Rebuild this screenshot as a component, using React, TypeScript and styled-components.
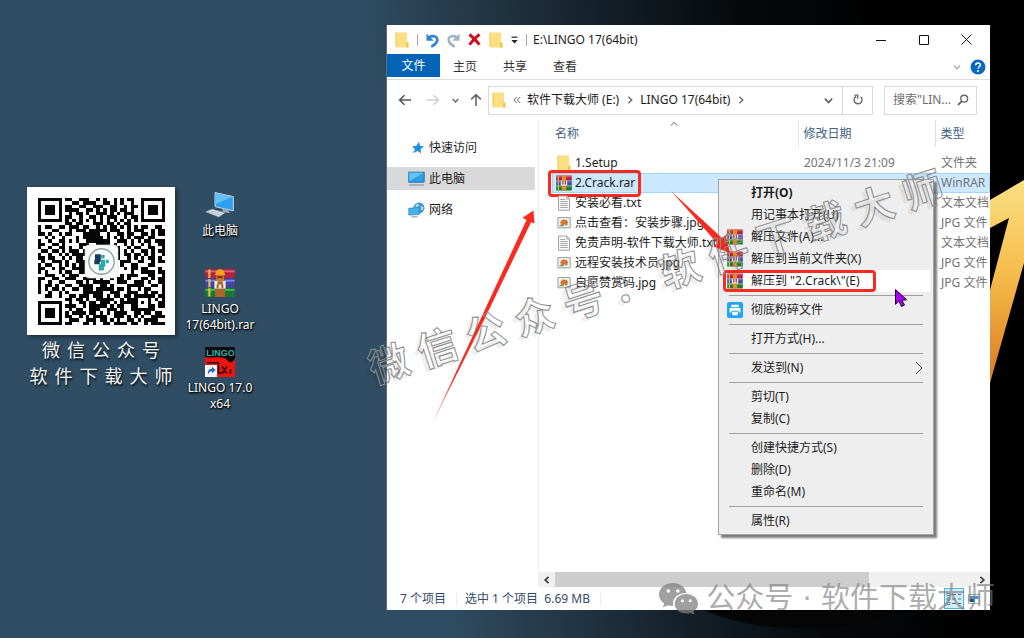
import React from 'react';
import styled, { createGlobalStyle } from 'styled-components';

const GlobalStyle = createGlobalStyle`
  *, *::before, *::after { box-sizing: border-box; }
  body {
    margin: 0;
    background: #000;
    font: 12px/20px "Noto Sans", "Noto Sans CJK SC", sans-serif;
    color: #1c1c1c;
  }
  button, input { font: inherit; color: inherit; border: 0; padding: 0; margin: 0; background: none; }
  a { color: inherit; text-decoration: none; }
  svg { display: block; flex: none; }
`;

/* ---------- Desktop ---------- */

const Desktop = styled.main`
  position: relative;
  display: flex;
  align-items: stretch;
  min-height: 100vh;
  padding: 25px 34px 28px 27px;
  overflow: hidden;
  background:
    radial-gradient(ellipse 150px 70px at 806px calc(100% - 78px), #050506 97%, transparent 100%),
    linear-gradient(82deg, rgba(0, 0, 0, 0) 40%, rgba(0, 0, 0, 0.35) 53%, rgba(0, 0, 0, 0.62) 63%, rgba(0, 0, 0, 0.88) 74%, #000 87%),
    #304d63;
`;

const Numeral = styled.svg`
  position: absolute;
  right: 0;
  top: 180px;
`;

const Account = styled.section`
  width: 148px;
  padding-top: 162px;
`;

const QrCard = styled.div`
  display: flex;
  align-items: center;
  justify-content: center;
  height: 148px;
  background: #fff;
  box-shadow: 2px 2px 4px rgba(0, 0, 0, 0.45);
`;

const Caption = styled.p`
  margin: 2px -10px 0;
  padding-left: 7px;
  font-size: 18px;
  line-height: 26px;
  letter-spacing: 7px;
  text-align: center;
  white-space: nowrap;
  color: #f3f5f6;
  text-shadow: 1px 2px 2px rgba(0, 0, 0, 0.8);
`;

const Shortcuts = styled.nav`
  display: flex;
  flex-direction: column;
  gap: 14px;
  width: 90px;
  padding-top: 167px;
`;

const Shortcut = styled.a<{ $system?: boolean }>`
  display: flex;
  flex-direction: column;
  align-items: center;
  gap: 3px;
  margin-bottom: ${p => (p.$system ? '15px' : '0')};
  line-height: 16px;
  text-align: center;
  color: #fff;
  text-shadow: 1px 1px 2px #000, 0 1px 2px #000;
`;

/* ---------- Explorer window ---------- */

const Explorer = styled.section`
  position: relative;
  display: flex;
  flex: 1;
  flex-direction: column;
  min-width: 0;
  margin-left: 121px;
  background: #fff;
  border-left: 1px solid #5d6d7a;
`;

const TitleBar = styled.header`
  display: flex;
  align-items: center;
  height: 29px;
  padding: 0 2px 0 8px;
`;

const QuickTools = styled.div`
  display: flex;
  align-items: center;
  gap: 8px;
`;

const Divider = styled.span`
  width: 1px;
  height: 12px;
  background: #a5a5a5;
`;

const WindowTitle = styled.h1`
  flex: 1;
  margin: 0 0 0 6px;
  font-size: 12px;
  font-weight: 400;
  white-space: nowrap;
`;

const CaptionButton = styled.button`
  display: grid;
  place-items: center;
  width: 43px;
  height: 29px;
`;

const IconButton = styled.button<{ $width?: number }>`
  display: grid;
  place-items: center;
  width: ${p => (p.$width ? `${p.$width}px` : 'auto')};
`;

const Ribbon = styled.nav`
  display: flex;
  height: 26px;
  padding-right: 4px;
  border-bottom: 1px solid #dcdcdc;
`;

const Tab = styled.button<{ $file?: boolean }>`
  width: ${p => (p.$file ? 53 : 50)}px;
  height: ${p => (p.$file ? 23 : 25)}px;
  background: ${p => (p.$file ? '#0164b4' : 'transparent')};
  color: ${p => (p.$file ? '#fff' : '#333')};
`;

const RibbonEnd = styled.div`
  display: flex;
  gap: 9px;
  align-items: center;
  height: 25px;
  margin-left: auto;
`;

const NavRow = styled.div`
  display: flex;
  align-items: center;
  height: 40px;
  padding: 0 13px 0 4px;
`;

const AddressBar = styled.div`
  display: flex;
  flex: 1;
  align-items: center;
  height: 29px;
  padding-left: 3px;
  border: 1px solid #d9d9d9;
`;

const Crumb = styled.button`
  white-space: nowrap;
`;

const AddressEnd = styled.div`
  display: flex;
  align-self: stretch;
  margin-left: auto;
  > button + button { border-left: 1px solid #d9d9d9; }
`;

const SearchBox = styled.label`
  display: flex;
  align-items: center;
  width: 93px;
  height: 29px;
  margin-left: 11px;
  padding: 0 7px 0 8px;
  border: 1px solid #d9d9d9;
`;

const SearchInput = styled.input`
  flex: 1;
  min-width: 0;
  &::placeholder { color: #6d6d6d; opacity: 1; }
`;

const Body = styled.div`
  display: flex;
  flex: 1;
`;

const Sidebar = styled.nav`
  display: flex;
  flex-direction: column;
  gap: 8px;
  width: 152px;
  padding: 16px 3px 0 0;
  border-right: 1px solid #f0f0f0;
`;

const SideItem = styled.a<{ $active?: boolean }>`
  display: flex;
  align-items: center;
  gap: 4px;
  height: 23px;
  padding-left: 21px;
  background: ${p => (p.$active ? '#d9d9d9' : 'transparent')};
`;

const FilePane = styled.div`
  display: flex;
  flex: 1;
  flex-direction: column;
  min-width: 0;
`;

const ListArea = styled.div`
  flex: 1;
  padding-left: 13px;
`;

const FileTable = styled.table`
  width: 100%;
  table-layout: fixed;
  border-collapse: collapse;
`;

const HeadCell = styled.th<{ $width?: number }>`
  position: relative;
  width: ${p => (p.$width ? `${p.$width}px` : 'auto')};
  height: 27px;
  padding: 0 0 0 ${p => (p.$width ? 5 : 3)}px;
  border-left: ${p => (p.$width ? '1px solid #e2e2e2' : '0')};
  font-weight: 400;
  text-align: left;
  color: #44607f;
`;

const SortMark = styled.span`
  position: absolute;
  top: 0;
  left: 118px;
`;

const Gap = styled.tr`
  height: 6px;
`;

const FileRow = styled.tr<{ $selected?: boolean }>`
  height: 20px;
  background: ${p => (p.$selected ? '#cce8ff' : 'transparent')};
  box-shadow: ${p => (p.$selected ? 'inset 0 0 0 1px #a6d4f7' : 'none')};
`;

const Cell = styled.td`
  padding: 0 0 0 6px;
  white-space: nowrap;
  color: #737373;
  overflow: hidden;
`;

const NameCell = styled.td`
  position: relative;
  padding: 0 0 0 4px;
  white-space: nowrap;
`;

const FileName = styled.span`
  display: grid;
  grid-template-columns: 16px 1fr;
  align-items: center;
  gap: 3px;
  height: 20px;
  > svg { justify-self: center; }
`;

const Highlight = styled.span`
  position: absolute;
  top: -3px;
  left: -4px;
  width: 93px;
  height: 27px;
  border: 3px solid #fa2a22;
  border-radius: 4px;
  pointer-events: none;
`;

const MenuHighlight = styled(Highlight)`
  top: 0;
  left: 1px;
  width: 153px;
  height: 22px;
`;

const ScrollBar = styled.div`
  display: flex;
  justify-content: space-between;
  height: 15px;
  background: #f0f0f0;
`;

const Track = styled.div`
  flex: 1;
`;

const Thumb = styled.div`
  width: 75%;
  height: 15px;
  background: #cdcdcd;
`;

const StatusBar = styled.footer`
  display: flex;
  align-items: center;
  height: 23px;
  padding: 0 6px 0 13px;
  color: #35496b;
`;

const StatusText = styled.span`
  padding-right: 10px;
  margin-right: 8px;
  border-right: 1px solid #ececec;
  line-height: 12px;
  white-space: pre;
`;

const ViewButton = styled.button<{ $on?: boolean }>`
  display: grid;
  place-items: center;
  width: 20px;
  height: 21px;
  margin-left: ${p => (p.$on ? 'auto' : '0')};
  border: ${p => (p.$on ? '1px solid #4fb6d8' : '0')};
  background: ${p => (p.$on ? '#cdeef9' : 'transparent')};
`;

/* ---------- Context menu ---------- */

const Menu = styled.div`
  position: absolute;
  top: 154px;
  left: 331px;
  width: 216px;
  padding: 2px 3px;
  border: 1px solid #a3a3a3;
  background: #eee;
  box-shadow: 3px 3px 2px rgba(80, 80, 80, 0.75);
`;

const MenuItem = styled.button<{ $hover?: boolean; $bold?: boolean }>`
  position: relative;
  display: grid;
  grid-template-columns: 24px 1fr auto;
  align-items: center;
  width: 100%;
  height: 22px;
  padding: 0 7px 0 5px;
  text-align: left;
  font-weight: ${p => (p.$bold ? 700 : 400)};
  background: ${p => (p.$hover ? '#fff' : 'transparent')};
  > span { white-space: nowrap; }
`;

const Separator = styled.hr`
  height: 1px;
  margin: 3px 7px;
  border: 0;
  background: #a0a0a0;
`;

/* ---------- Overlays ---------- */

const Arrows = styled.svg`
  position: absolute;
  top: 165px;
  left: 34px;
  pointer-events: none;
`;

const Pointer = styled.svg`
  position: absolute;
  top: 263px;
  left: 507px;
  pointer-events: none;
`;

const Watermark = styled.div`
  position: absolute;
  top: 223px;
  left: -36px;
  width: 620px;
  font-size: 40px;
  line-height: 54px;
  font-weight: 700;
  letter-spacing: 11px;
  text-align: center;
  white-space: nowrap;
  transform: rotate(-18deg);
  color: transparent;
  -webkit-text-stroke: 1px #8c8c8c;
  text-shadow: -5px 2px 0 rgba(0, 0, 0, 0.07);
  pointer-events: none;
`;

const Signature = styled.div`
  position: absolute;
  right: -5px;
  bottom: -6px;
  display: flex;
  align-items: center;
  gap: 8px;
  font: 400 29px/36px "DejaVu Sans", "Noto Sans CJK SC", sans-serif;
  color: rgba(125, 125, 125, 0.65);
  white-space: nowrap;
  pointer-events: none;
`;

/* ---------- Drawings ---------- */

const Folder = () => (
  <svg width="14" height="16" viewBox="0 0 14 16">
    <path d="M0.5 0.5H12v11.8h1.5V15.5H1.8L0.5 14.6z" fill="#fbdf82" />
    <path d="M11.2 10.5h2.3v5h-2.3z" fill="#eec44e" />
    <path d="M0.5 0.5h1.2v15l-1.2-.8z" fill="#f5d06c" />
  </svg>
);

const Books = ({ size = 16, strap = 'small' }: { size?: number; strap?: 'small' | 'large' }) => (
  <svg width={size} height={size} viewBox="0 0 16 16">
    <path d="M.2.5h15.600v4.900H.2z" fill="#b3213f" />
    <path d="M.2 5.600h15.600v4.700H.2z" fill="#4644a8" />
    <path d="M.2 10.500h15.600v5H.2z" fill="#197a34" />
    <path d="M.2 1.300h15.600v1H.2z" fill="#e0607a" />
    <path d="M.2 6.300h15.600v1H.2z" fill="#7f86dc" />
    <path d="M.2 11.200h15.600v1H.2z" fill="#45b45d" />
    <path d="M1.800.8h1.100v4.500H1.800zM1.800 5.800h1.100v4.400H1.800zM1.800 10.800h1.100v4.400H1.800z" fill="#e9c34c" />
    {strap === 'small' ? (
      <>
        <path d="M5.800.5h4.400v15H5.800z" fill="#e58a2d" />
        <path d="M4.800 5.600h6.400v5H4.800z" fill="#efe7df" />
        <path d="M6.200 5.600h1.200v3.800H6.200zM8.700 5.600h1.200v3.800H8.700z" fill="#9c4630" />
      </>
    ) : (
      <>
        <path d="M5.600 3.200C5.600-.2 10.500-.2 10.500 3.200l.5.7H5.100z" fill="#f5a31c" />
        <path d="M6 3.900h4.100v3.500H6z" fill="#d07a26" />
        <path d="M6.600 4.400h2.800v1H6.600z" fill="#643310" />
        <path d="M5 7h6v4H5z" fill="#f4eee4" />
        <path d="M6.700 7h2.800v1.800H6.700zM6.200 8.800h1.100v2H6.200zM8.700 8.800h1.100v2H8.700z" fill="#b0622a" />
        <path d="M5.400 11.200h5.300v4.300H5.400z" fill="#b0622a" />
      </>
    )}
  </svg>
);

const TextDoc = () => (
  <svg width="14" height="16" viewBox="0 0 14 16">
    <path d="M1.500 1h8.300l2.700 2.700V15.200h-11z" fill="#f7f7f7" stroke="#a2a2a2" />
    <path d="M9.700 1v3h2.800" fill="none" stroke="#a2a2a2" />
    <path d="M3.200 4.500h5M3.200 6.500h7.600M3.200 8.500h7.600M3.200 10.500h7.600M3.200 12.500h7.600" stroke="#a8a8a8" />
  </svg>
);

const ImageDoc = () => (
  <svg width="14" height="16" viewBox="0 0 14 16">
    <path d="M.9 2.600h12.300v10.200H.9z" fill="#f4f6f6" stroke="#9c9c9c" />
    <path d="M2.500 4.200h9v6.900h-9z" fill="#e9eee6" />
    <path d="M2.800 8l2.700-3.500L9.800 5l1.600 3-2 .2v2H8V8.500L6.600 10.600H3.400l1-2.200z" fill="#d9722f" />
    <path d="M2.500 10h4v1.200h-4zM8.800 7.300h1.600v3H8.800z" fill="#719a61" />
  </svg>
);

const Monitor = () => (
  <svg width="17" height="16" viewBox="0 0 17 16">
    <path d="M.8 1.200h15.400v10H.8z" fill="#2c9fe6" stroke="#2474ab" />
    <path d="M1.400 1.800h14.200L1.400 10z" fill="#66c5f7" />
    <path d="M1 14h15" stroke="#8ca2b1" strokeWidth="1.400" />
  </svg>
);

const Star = () => (
  <svg width="17" height="16" viewBox="0 0 17 16">
    <path d="M11 1.800l1 4 4 .6-3.500 2.800.7 4.200-3.600-2.300-3.800 2 1.100-4.200L4 6.200l4.300-.3z" fill="#1f8edb" />
    <path d="M3.600 11.900l3.300-1.200-.6 2z" fill="#6fb9ea" />
  </svg>
);

const Network = () => (
  <svg width="17" height="16" viewBox="0 0 17 16">
    <circle cx="11" cy="6" r="5.500" fill="#3f97cf" />
    <path d="M8 2.200c1.800-.8 3.600.3 2.900 1.800-.8 1.300-2.900 1-3.900 2.200zM12.600 4l3 .9-.8 4-2-1.500z" fill="#a7daf0" />
    <path d="M.8 6.300l10.400-1v7.200L.8 13z" fill="#43b4ef" stroke="#2c7fb7" strokeWidth=".7" />
    <path d="M3.500 14.800h6" stroke="#8aa5b8" strokeWidth="1.200" />
  </svg>
);

type Side = 'up' | 'down' | 'left' | 'right';

const Chevron = ({ dir, color = '#666', size = 8, width = 1.3 }: { dir: Side; color?: string; size?: number; width?: number }) => {
  const turn = { right: 0, down: 90, left: 180, up: 270 }[dir];
  return (
    <svg width={size} height={size} viewBox="0 0 8 8">
      <path d="M2.400.8L5.800 4 2.400 7.200" fill="none" stroke={color} strokeWidth={width} transform={`rotate(${turn} 4 4)`} />
    </svg>
  );
};

const Arrow = ({ dir, color }: { dir: 'left' | 'right' | 'up'; color: string }) => (
  <svg width="14" height="14" viewBox="0 0 14 14">
    <path d="M13 7H1.700M6.400 2.200L1.600 7l4.800 4.800" fill="none" stroke={color} strokeWidth="1.600" transform={`rotate(${{ left: 0, up: 90, right: 180 }[dir]} 7 7)`} />
  </svg>
);

const Undo = ({ color, flip }: { color: string; flip?: boolean }) => (
  <svg width="13" height="16" viewBox="0 0 13 16">
    <g transform={flip ? 'translate(13 0) scale(-1 1)' : undefined}>
      <path d="M3 5.400C8 2.500 12.500 5 11 9.200C10 11.800 8 13.400 5.200 14.600" fill="none" stroke={color} strokeWidth="2.600" />
      <path d="M.5 1.500v7.300h7.300z" fill={color} />
    </g>
  </svg>
);

const DesktopPc = () => (
  <svg width="30" height="28" viewBox="0 0 30 28">
    <path d="M10 .6l18.300 4v14.200L10 14.600z" fill="#2fa0ef" stroke="#c6d8e4" strokeWidth="1" />
    <path d="M10.600 1.400l16.800 3.700L10.600 12z" fill="#62c2fb" />
    <path d="M17.400 17l6 1.300 1.200 3-6.800-1.600z" fill="#9fb0bb" />
    <path d="M.8 19.800l6.400-2.600 12.600 3.600-6 4.200z" fill="#e2e7ea" stroke="#94a3ad" strokeWidth=".7" />
    <path d="M3.600 19.800l11.400 3.400M6 18.800l11.400 3.200" stroke="#9da9b1" strokeWidth=".7" />
  </svg>
);

const LingoIcon = () => (
  <svg width="30" height="30" viewBox="0 0 30 30">
    <path d="M0 0h30v30H0z" fill="#ee1410" />
    <path d="M0 0h30v11c-2 4-4 6-7 3-3-3-5-4-8-4H0z" fill="#12090c" />
    <path d="M2 15.800h12M13.500 16v10h4M17 19.500l5 7M22 19.500l-5 7M25.500 22v5" fill="none" stroke="#260a09" strokeWidth="1.500" />
    <text x="15.500" y="9.300" textAnchor="middle" fontFamily="Liberation Sans, sans-serif" fontSize="9" fontWeight="700" fill="#2ab5ae">LINGO</text>
    <path d="M0 18h12v12H0z" fill="#f4f6f8" />
    <path d="M3 27.500c-.4-4 1.400-5.700 4-5.700v-2L10.600 23 7 26.300v-2c-2 0-3 .7-4 3.200z" fill="#2666b6" />
  </svg>
);

const Printer = () => (
  <svg width="16" height="16" viewBox="0 0 16 16">
    <rect width="16" height="16" rx="2" fill="#20a6f5" />
    <path d="M4.300 2.700h7.400v2.600H4.300zM2.600 6h10.800v4.400h-1.800V8.800H4.400v1.600H2.600zM5.300 9.800h5.400v3.400H5.300z" fill="#fff" />
  </svg>
);

const QR_ROWS = [
  '#######.##..###..#.#..#.#.##..#######',
  '#.....#...##.####..##.#.#..#..#.....#',
  '#.###.#.##..##..###..##..#.##.#.###.#',
  '#.###.#.####..##.#.#.##.##.#..#.###.#',
  '#.###.#..#.##.#..###.#.#.###..#.###.#',
  '#.....#.##..#..##.#.###..#.##.#.....#',
  '#######.#.#.#.#.#.#.#.#.#.#.#.#######',
  '........##.##...###.##.#.##..........',
  '#.##..##.###.##..#.#.##.#.#.#.##..##.',
  '#...##...#.###.#####.###..#.###..#.##',
  '##.#..#.##...#####..#..##.##..##.#.##',
  '..#.#..#...#.######.#.#.#.#.###.##...',
  '#..#..##.#.#..#######..###.#.#.##.###',
  '##..##.#....###..####.#..#.#..#.#..##',
  '#..#..##.#..#........###..#.##..##..#',
  '.##.##.#.###.#......#..#.#.#..##.#.##',
  '#..#..#.#.####.......###.##.##.#.#..#',
  '##.##..#.#.##........#.#..#.#.#.##.#.',
  '.#..###.#..###.......##.###..##..#.##',
  '#.##..#.#.#.##........#.#..##...##...',
  '##..#.##..####.......##..#.##.##...#.',
  '#.#...#.##..##......#.#....#..####.##',
  '..###..#.###..#.#.##.##.#.###...##..#',
  '##..##..###..####.#..#.##.#...##.#.##',
  '#..#..##...##.#.#####..###..###.#..##',
  '#.##.#..##..####..##.#....#####..##.#',
  '#.#.##.#..##.###.#####.##.#..#.##...#',
  '#..#..#.#....######..###..###..#.##.#',
  '..##..#..##.###.###.#.##.##.######.##',
  '........##.##.#..#####..#.###...#.#.#',
  '#######..#..##.##.###.#.#####.#.#..##',
  '#.....#.###..#.#####.#.##..##...##.##',
  '#.###.#..#.##..###..###.#..#######...',
  '#.###.#.#.####.##.#.#.####..##.##.##.',
  '#.###.#.##..#.#.####..###.#.#.#..####',
  '#.....#..###..###.##.#.#..##.#.####..',
  '#######.##...##.#..##.####.##..#.####',
];

// Each run of dark modules becomes one rectangle.
const qrPath = QR_ROWS.map((row, y) =>
  [...row.matchAll(/#+/g)].map(run => `M${run.index} ${y}h${run[0].length}v1h-${run[0].length}z`).join(''),
).join('');

const QrCode = () => (
  <svg width="127" height="127" viewBox="0 0 37 37" role="img" aria-label="二维码">
    <path d={qrPath} fill="#050505" shapeRendering="crispEdges" />
    <rect x="13.700" y="13.700" width="9.600" height="9.600" rx="1.200" fill="#f8fafa" stroke="#dfe3e4" strokeWidth=".2" />
    <circle cx="18.500" cy="18.500" r="3.700" fill="#fff" stroke="#8fa3ab" strokeWidth=".4" />
    <path d="M16.600 16.400h1.700v2.200h-1.700zM16.400 18h1.600v1.300h-1.600z" fill="#173c62" />
    <path d="M18.400 16.600h1v1h-1zM19.800 18h.8v1h-.8zM17.700 19.300h1.500v1.800h-1.500zM18.300 18h1.300v2h-1.300z" fill="#28aaa6" />
  </svg>
);

const WeChat = () => (
  <svg width="39" height="31" viewBox="0 0 39 31">
    <path fillRule="evenodd" d="M14 0C6 0 0 5.200 0 11.600c0 3.700 2 6.900 5.200 9l-1.300 4 4.700-2.400c1.900.5 3.700.8 5.700.7C12.600 15.700 18.500 9.900 27.500 10C26.300 4.200 20.700 0 14 0zM9.300 6.200a1.800 1.800 0 1 1 0 3.600a1.800 1.800 0 0 1 0-3.600zM18.800 6.200a1.800 1.800 0 1 1 0 3.600a1.800 1.800 0 0 1 0-3.600z" fill="#808080" opacity=".75" />
    <path fillRule="evenodd" d="M27.300 11C20.700 11 15.700 15.400 15.700 20.800C15.700 26.300 20.700 30.600 27.300 30.600c1.500 0 3-.3 4.300-.7l3.900 2-1-3.400C37.200 26.700 39 24 39 20.800C39 15.400 33.800 11 27.300 11zM23.400 16.200a1.500 1.500 0 1 1 0 3a1.500 1.500 0 0 1 0-3zM31.200 16.200a1.500 1.500 0 1 1 0 3a1.500 1.500 0 0 1 0-3z" fill="#808080" opacity=".75" />
  </svg>
);

/* ---------- Data ---------- */

const files = [
  { name: '1.Setup', date: '2024/11/3 21:09', type: '文件夹', icon: <Folder /> },
  { name: '2.Crack.rar', date: '', type: 'WinRAR', icon: <Books />, selected: true },
  { name: '安装必看.txt', date: '', type: '文本文档', icon: <TextDoc /> },
  { name: '点击查看：安装步骤.jpg', date: '', type: 'JPG 文件', icon: <ImageDoc /> },
  { name: '免责声明-软件下载大师.txt', date: '', type: '文本文档', icon: <TextDoc /> },
  { name: '远程安装技术员.jpg', date: '', type: 'JPG 文件', icon: <ImageDoc /> },
  { name: '自愿赞赏码.jpg', date: '', type: 'JPG 文件', icon: <ImageDoc /> },
];

type Entry = { label: string; icon?: React.ReactNode; bold?: boolean; marked?: boolean; more?: boolean };

const menuGroups: Entry[][] = [
  [
    { label: '打开(O)', bold: true },
    { label: '用记事本打开(U)' },
    { label: '解压文件(A)...', icon: <Books /> },
    { label: '解压到当前文件夹(X)', icon: <Books /> },
    { label: '解压到 "2.Crack\\"(E)', icon: <Books />, marked: true },
  ],
  [{ label: '彻底粉碎文件', icon: <Printer /> }],
  [{ label: '打开方式(H)...' }],
  [{ label: '发送到(N)', more: true }],
  [{ label: '剪切(T)' }, { label: '复制(C)' }],
  [{ label: '创建快捷方式(S)' }, { label: '删除(D)' }, { label: '重命名(M)' }],
  [{ label: '属性(R)' }],
];

export default function App() {
  return (
    <Desktop>
      <GlobalStyle />
      <Numeral width="34" height="204" viewBox="0 0 34 204">
        <defs>
          <linearGradient id="gold" x1="0" y1="0" x2="0" y2="1">
            <stop offset="0" stopColor="#fbe083" />
            <stop offset=".45" stopColor="#f6bd4d" />
            <stop offset="1" stopColor="#d97a1c" />
          </linearGradient>
        </defs>
        <path d="M0 20L34 0V83L0 203V110L19 38L0 48z" fill="url(#gold)" />
      </Numeral>

      <Account>
        <QrCard><QrCode /></QrCard>
        <Caption>微信公众号<br />软件下载大师</Caption>
      </Account>

      <Shortcuts>
        <Shortcut href="#pc" $system><DesktopPc />此电脑</Shortcut>
        <Shortcut href="#rar"><Books size={30} strap="large" /><span>LINGO<br />17(64bit).rar</span></Shortcut>
        <Shortcut href="#lingo"><LingoIcon /><span>LINGO 17.0<br />x64</span></Shortcut>
      </Shortcuts>

      <Explorer>
        <TitleBar>
          <QuickTools>
            <Folder />
            <Divider />
            <IconButton aria-label="撤消"><Undo color="#2f86cc" /></IconButton>
            <IconButton aria-label="恢复"><Undo color="#a3b2c8" flip /></IconButton>
            <IconButton aria-label="删除">
              <svg width="13" height="13" viewBox="0 0 13 13"><path d="M1.500 1.500C4 3.500 8.500 8 11.500 11.700M11.500 1.300C8.500 3.500 4 8 1.500 11.700" stroke="#d60a17" strokeWidth="2.900" fill="none" /></svg>
            </IconButton>
            <IconButton aria-label="新建文件夹"><Folder /></IconButton>
            <IconButton aria-label="自定义">
              <svg width="7" height="8" viewBox="0 0 7 8"><path d="M.5 1.200h6" stroke="#222" strokeWidth="1.200" /><path d="M.3 4h6.400L3.500 7.400z" fill="#222" /></svg>
            </IconButton>
            <Divider />
          </QuickTools>
          <WindowTitle>E:\LINGO 17(64bit)</WindowTitle>
          <CaptionButton aria-label="最小化"><svg width="10" height="10"><path d="M0 5.500h10" stroke="#111" /></svg></CaptionButton>
          <CaptionButton aria-label="最大化"><svg width="10" height="10"><path d="M.5.5h9v9h-9z" stroke="#111" fill="none" /></svg></CaptionButton>
          <CaptionButton aria-label="关闭"><svg width="11" height="11"><path d="M.5.5l10 10M10.500.5l-10 10" stroke="#111" /></svg></CaptionButton>
        </TitleBar>

        <Ribbon>
          <Tab $file>文件</Tab>
          <Tab>主页</Tab>
          <Tab>共享</Tab>
          <Tab>查看</Tab>
          <RibbonEnd>
            <IconButton aria-label="展开功能区"><Chevron dir="down" color="#aaa" /></IconButton>
            <IconButton aria-label="帮助">
              <svg width="16" height="16" viewBox="0 0 16 16">
                <circle cx="8" cy="8" r="7.500" fill="#0b68c1" />
                <path d="M5.700 6.300c0-3.200 4.800-3 4.600-.2-.1 1.600-2.100 1.700-2.200 3.500" fill="none" stroke="#fff" strokeWidth="1.600" />
                <circle cx="8" cy="12" r="1" fill="#fff" />
              </svg>
            </IconButton>
          </RibbonEnd>
        </Ribbon>

        <NavRow>
          <IconButton $width={28} aria-label="后退"><Arrow dir="left" color="#555" /></IconButton>
          <IconButton $width={28} aria-label="前进"><Arrow dir="right" color="#cfcfcf" /></IconButton>
          <IconButton $width={16} aria-label="最近浏览的位置"><Chevron dir="down" size={7} width={1.6} /></IconButton>
          <IconButton $width={25} aria-label="上移"><Arrow dir="up" color="#666" /></IconButton>
          <AddressBar>
            <Folder />
            <IconButton $width={21} aria-label="更多位置">
              <svg width="8" height="8" viewBox="0 0 8 8"><path d="M3.700 1L.9 4l2.800 3M7.200 1L4.400 4l2.800 3" fill="none" stroke="#666" /></svg>
            </IconButton>
            <Crumb>软件下载大师 (E:)</Crumb>
            <IconButton $width={21} aria-label="展开"><Chevron dir="right" /></IconButton>
            <Crumb>LINGO 17(64bit)</Crumb>
            <IconButton $width={21} aria-label="展开"><Chevron dir="right" /></IconButton>
            <AddressEnd>
              <IconButton $width={28} aria-label="历史记录"><Chevron dir="down" width={1.6} size={9} /></IconButton>
              <IconButton $width={30} aria-label="刷新">
                <svg width="12" height="12" viewBox="0 0 12 12">
                  <path d="M8.600 2.700A4 4 0 1 1 4 2.400" fill="none" stroke="#666" strokeWidth="1.400" />
                  <path d="M2.200 1.200h3.500v3.500" fill="none" stroke="#666" strokeWidth="1.300" />
                </svg>
              </IconButton>
            </AddressEnd>
          </AddressBar>
          <SearchBox>
            <SearchInput aria-label="搜索" placeholder={'搜索"LIN...'} />
            <svg width="12" height="12" viewBox="0 0 12 12"><circle cx="7.200" cy="4.700" r="3.400" fill="none" stroke="#666" strokeWidth="1.400" /><path d="M4.800 7.200L1 11" stroke="#666" strokeWidth="1.800" /></svg>
          </SearchBox>
        </NavRow>

        <Body>
          <Sidebar>
            <SideItem href="#quick"><Star />快速访问</SideItem>
            <SideItem href="#this-pc" $active><Monitor />此电脑</SideItem>
            <SideItem href="#network"><Network />网络</SideItem>
          </Sidebar>
          <FilePane>
            <ListArea>
              <FileTable>
                <thead>
                  <tr>
                    <HeadCell>名称<SortMark><Chevron dir="up" width={1} /></SortMark></HeadCell>
                    <HeadCell $width={137}>修改日期</HeadCell>
                    <HeadCell $width={55}>类型</HeadCell>
                  </tr>
                </thead>
                <tbody>
                  <Gap />
                  {files.map(f => (
                    <FileRow key={f.name} $selected={f.selected}>
                      <NameCell>
                        <FileName>{f.icon}{f.name}</FileName>
                        {f.selected && <Highlight />}
                      </NameCell>
                      <Cell>{f.date}</Cell>
                      <Cell>{f.type}</Cell>
                    </FileRow>
                  ))}
                </tbody>
              </FileTable>
            </ListArea>
            <ScrollBar>
              <IconButton $width={16} aria-label="向左滚动"><Chevron dir="left" color="#444" width={1.8} /></IconButton>
              <Track><Thumb /></Track>
              <IconButton $width={16} aria-label="向右滚动"><Chevron dir="right" color="#444" width={1.8} /></IconButton>
            </ScrollBar>
          </FilePane>
        </Body>

        <StatusBar>
          <StatusText>7 个项目</StatusText>
          <StatusText>选中 1 个项目  6.69 MB</StatusText>
          <ViewButton $on aria-label="详细信息">
            <svg width="16" height="16" viewBox="0 0 16 16"><path d="M1 2.500h3v2H1zM1 7h3v2H1zM1 11.500h3v2H1z" fill="#fff" stroke="#596a78" strokeWidth=".8" /><path d="M6 3.500h4M12 3.500h3M6 8h4M12 8h3M6 12.500h4M12 12.500h3" stroke="#596a78" /></svg>
          </ViewButton>
          <ViewButton aria-label="大图标">
            <svg width="12" height="10" viewBox="0 0 12 10"><path d="M.5.500h11v9H.5z" fill="#fff" stroke="#9ab" /><path d="M1.500 2h9v3h-9z" fill="#4a90e0" /><path d="M1.500 5h5v3h-5z" fill="#234a50" /></svg>
          </ViewButton>
        </StatusBar>

        <Menu role="menu">
          {menuGroups.map((group, i) => (
            <React.Fragment key={i}>
              {i > 0 && <Separator />}
              {group.map(item => (
                <MenuItem key={item.label} role="menuitem" $bold={item.bold} $hover={item.marked}>
                  <span>{item.icon}</span>
                  <span>{item.label}</span>
                  {item.more && (
                    <svg width="8" height="14" viewBox="0 0 8 14"><path d="M1 1l6 6-6 6" fill="none" stroke="#444" /></svg>
                  )}
                  {item.marked && <MenuHighlight />}
                </MenuItem>
              ))}
            </React.Fragment>
          ))}
        </Menu>

        <Arrows width="320" height="240" viewBox="421 190 320 240">
          <defs>
            <linearGradient id="fade" x1="0" y1="1" x2="0" y2="0">
              <stop offset="0" stopColor="#fb2a1f" stopOpacity=".2" />
              <stop offset=".25" stopColor="#fb2a1f" />
            </linearGradient>
          </defs>
          <path d="M430 428L526.500 220L522.500 217.800L533.500 210.500L534.500 223.500L531 222.200L486 316z" fill="url(#fade)" />
          <path d="M671 191L722 238L725.500 235L730 253L713.500 246.500L717 243z" fill="#fb2a1f" />
        </Arrows>

        <Watermark>微信公众号：软件下载大师</Watermark>

        <Signature><WeChat /><span>公众号 · 软件下载大师</span></Signature>

        <Pointer width="15" height="20" viewBox="0 0 15 20">
          <path d="M1.500 1.500v14.800l3.400-3.100 2.600 5.300 3-1.500-2.600-4.700 4.800-.5z" fill="#a600f0" stroke="#1b0328" strokeWidth="1" />
        </Pointer>
      </Explorer>
    </Desktop>
  );
}
